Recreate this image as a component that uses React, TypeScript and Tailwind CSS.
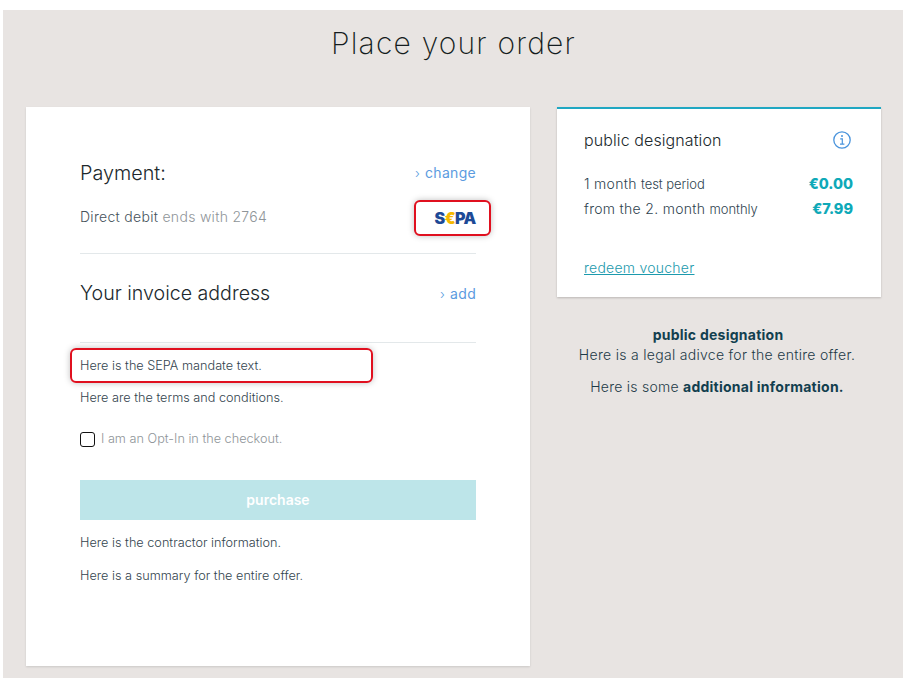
function ActionLink({ label, className = '' }: { label: string; className?: string }) {
  return (
    <a className={`flex items-center text-[14px] leading-5 tracking-[0.3px] text-[#5b9be0] ${className}`}>
      <span className="mr-[5px] text-[13px] font-light">›</span>
      {label}
    </a>
  )
}

function SepaLogo() {
  return (
    <div className="flex h-[36px] w-[77px] items-center justify-center rounded-[6px] border-2 border-[#e0101f] bg-white pl-[5px] shadow-[0_0_6px_rgba(0,0,0,0.25)]">
      <span className="font-['Inter',sans-serif] text-[16px] font-black leading-none tracking-[-0.6px] text-[#1d4a96]">
        S<span className="text-[#f5b800]">€</span>PA
      </span>
    </div>
  )
}

function PriceRow({ main, sub, price }: { main: string; sub: string; price: string }) {
  return (
    <div className="flex items-center justify-between">
      <span className="text-[14px] font-light leading-[24.5px] tracking-[0.3px] text-[#2f4450]">
        {main} <span className="text-[13px] tracking-[-0.05px]">{sub}</span>
      </span>
      <span className="mr-[1px] text-[14.5px] font-extrabold leading-[24.5px] text-[#0fa9b8]">{price}</span>
    </div>
  )
}

const bodyText = 'text-[12.7px] font-light leading-[20px] text-[#33444e]'

export default function App() {
  return (
    <div className="min-h-[691px] bg-white pl-[3px] pr-[12px] pt-[10px] font-['Inter',sans-serif]">
      <div className="h-[668px] w-[900px] bg-[#e8e4e2] pl-[23px] pr-[22px]">
        <h1 className="pt-[13px] text-center text-[30px] font-extralight leading-[40px] tracking-[1.2px] text-[#141c20]">
          Place your order
        </h1>

        <div className="mt-[44px] flex items-start gap-[27px]">
          {/* checkout form */}
          <div className="h-[559px] w-[504px] bg-white px-[54px] pt-[52px] shadow-[0_1px_2px_rgba(0,0,0,0.12)]">
            <div className="flex items-center justify-between">
              <h2 className="text-[19.8px] font-light leading-7 text-[#20282c]">Payment:</h2>
              <ActionLink label="change" />
            </div>
            <div className="mt-[13px] flex h-[36px] items-center justify-between">
              <p className="mb-[3px] text-[14px] font-light tracking-[0.3px] text-[#46535b]">
                Direct debit <span className="text-[#8f9599]">ends with 2764</span>
              </p>
              <div className="-mr-[15px]">
                <SepaLogo />
              </div>
            </div>

            <div className="mt-[17px] border-t border-[#e3e8ea] pt-[25px]">
              <div className="flex items-center justify-between">
                <h2 className="text-[19.6px] font-light leading-7 text-[#20282c]">Your invoice address</h2>
                <ActionLink label="add" className="mt-[2px]" />
              </div>
            </div>

            <div className="mt-[35px] border-t border-[#e3e8ea]">
              <div className="mt-[5px] -ml-[10px] flex h-[35px] w-[303px] items-center rounded-[6px] border-2 border-[#e0101f] pl-[8px] shadow-[0_0_6px_rgba(0,0,0,0.25)]">
                <p className={bodyText}>Here is the SEPA mandate text.</p>
              </div>
              <p className={`mt-[5px] ${bodyText}`}>Here are the terms and conditions.</p>
            </div>

            <label className="mt-[21px] flex items-center">
              <span className="h-[15px] w-[15px] rounded-[3px] border-[1.5px] border-[#111] bg-white" />
              <span className="ml-[6px] text-[12.7px] font-light leading-[20px] text-[#8f9599]">I am an Opt-In in the checkout.</span>
            </label>

            <button className="mt-[31px] flex h-[40px] w-full items-center justify-center bg-[#bde5e9] pb-[2px] text-[14px] font-semibold text-white">
              purchase
            </button>

            <p className={`mt-[13px] ${bodyText}`}>Here is the contractor information.</p>
            <p className={`mt-[13px] ${bodyText}`}>Here is a summary for the entire offer.</p>
          </div>

          {/* offer summary */}
          <div className="w-[324px]">
            <div className="h-[190px] border-t-2 border-[#1fa7c2] bg-white px-[27px] pt-[19px] shadow-[0_1px_2px_rgba(0,0,0,0.2)]">
              <div className="flex items-center justify-between">
                <h3 className="text-[16px] font-light leading-6 tracking-[0.1px] text-[#20282c]">public designation</h3>
                <svg width="20" height="20" viewBox="0 0 20 20" fill="none" className="mr-[2px]">
                  <circle cx="10" cy="10" r="8.2" stroke="#4a94dc" strokeWidth="1.3" />
                  <circle cx="10" cy="6" r="1" fill="#4a94dc" />
                  <path d="M8.2 8.8H10.3V14M8 14.2H12.4" stroke="#4a94dc" strokeWidth="1.2" />
                </svg>
              </div>
              <div className="mt-[20px]">
                <PriceRow main="1 month" sub="test period" price="€0.00" />
                <PriceRow main="from the 2. month" sub="monthly" price="€7.99" />
              </div>
              <a className="mt-[37px] block text-[14px] font-light leading-5 tracking-[0.25px] text-[#1c9aad] underline">redeem voucher</a>
            </div>

            <div className="mt-[28px] text-center text-[14px] leading-[20px] text-[#37505c]">
              <p className="pr-[2px] font-bold tracking-[0.25px] text-[#123f4f]">public designation</p>
              <div className="pr-[4px] font-light text-[#1d3a47]">
                <p className="tracking-[0.3px]">Here is a legal adivce for the entire offer.</p>
                <p className="mt-[12px] tracking-[0.25px]">
                  Here is some <span className="font-bold text-[#123f4f]">additional information.</span>
                </p>
              </div>
            </div>
          </div>
        </div>
      </div>
    </div>
  )
}
